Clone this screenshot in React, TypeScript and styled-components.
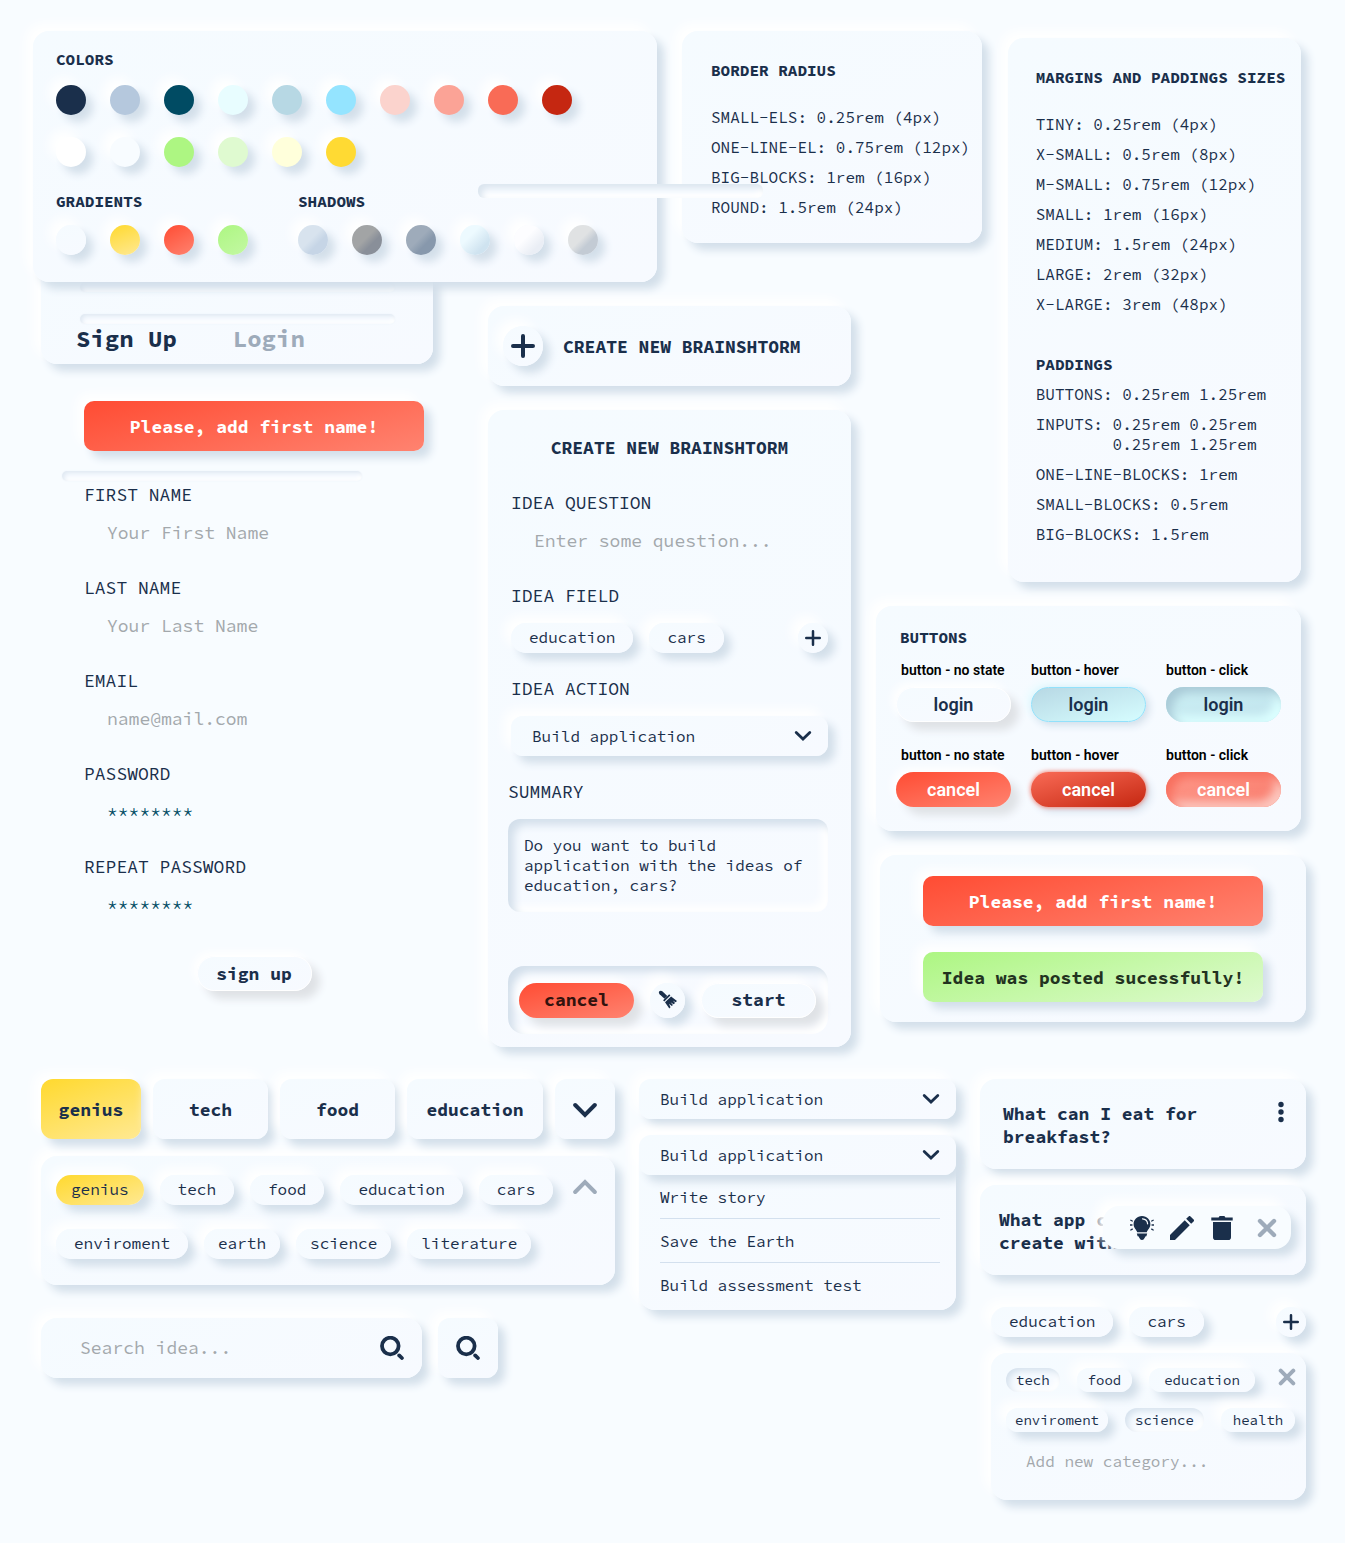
import React from "react";
import styled, { createGlobalStyle, css } from "styled-components";

const navy = "#1a2f4b";
const muted = "#9eabba";
const hint = "#a3a8ac";
const surface = "linear-gradient(160deg, #f5fbff 0%, #f7faff 100%)";
const red = "linear-gradient(165deg, #ff4c33 0%, #ff8370 100%)";
const green = "linear-gradient(165deg, #adf682 0%, #dffad0 100%)";
const yellow = "linear-gradient(160deg, #ffd92e 0%, #ffe993 100%)";
const raised = "7px 7px 8px #d3dfea, -7px -7px 12px #ffffff";
const sunken = "inset 6px 6px 8px #d3dfeb, inset -6px -6px 8px #ffffff";

const Global = createGlobalStyle`
  *, *::before, *::after { box-sizing: border-box; }
  body {
    margin: 0;
    background: #f8fcff;
    color: ${navy};
    font-family: "Source Code Pro", "Noto Sans Mono", "Liberation Mono", monospace;
    font-size: 16px;
    line-height: 20px;
  }
  button, input, select, textarea {
    font: inherit;
    color: inherit;
    border: 0;
    background: none;
    margin: 0;
    padding: 0;
    outline: 0;
  }
  button { cursor: pointer; }
  h2, h3, p, ul { margin: 0; padding: 0; }
  ul { list-style: none; }
  svg { display: block; flex: none; }
`;

const Page = styled.main`
  padding: 31px 0 43px;
  overflow-x: hidden;
`;

const Upper = styled.div`
  display: grid;
  grid-template-columns:
    minmax(0, 430fr) minmax(0, 169fr) minmax(0, 169fr)
    minmax(0, 106fr) minmax(0, 294fr);
  grid-template-rows: auto 1fr;
  gap: 24px 25px;
  align-items: start;
  padding: 0 44px 0 33px;
`;

const Lower = styled.div`
  display: grid;
  grid-template-columns: minmax(0, 574fr) minmax(0, 317fr) minmax(0, 326fr);
  gap: 24px;
  align-items: start;
  padding: 0 39px 0 41px;
  margin-top: 32px;
`;

const Card = styled.section`
  border-radius: 16px;
  background: ${surface};
  box-shadow: ${raised};
`;

const Heading = styled.h2`
  font-size: 16px;
  line-height: 20px;
  font-weight: 700;
  white-space: nowrap;
`;

const BigHeading = styled.h2<{ $center?: boolean }>`
  font-size: 18px;
  line-height: 20px;
  font-weight: 700;
  white-space: nowrap;
  text-align: ${(p) => (p.$center ? "center" : "left")};
`;

/* Palette */

const PaletteCard = styled(Card)`
  grid-column: 1 / 3;
  grid-row: 1;
  position: relative;
  z-index: 2;
  padding: 18px 23px 27px;
`;

const Swatches = styled.div<{ $top: number }>`
  display: flex;
  gap: 24px;
  margin-top: ${(p) => p.$top}px;
`;

const Swatch = styled.span<{ $fill: string }>`
  flex: none;
  width: 30px;
  height: 30px;
  border-radius: 50%;
  background: ${(p) => p.$fill};
  box-shadow: ${raised};
`;

const PaletteGroups = styled.div`
  display: flex;
  gap: 50px;
  margin-top: 24px;
`;

/* Specification lists */

const SpecList = styled.ul<{ $top: number }>`
  position: relative;
  z-index: 1;
  margin-top: ${(p) => p.$top}px;
`;

const SpecItem = styled.li`
  padding: 5px 0;
  white-space: pre;
`;

const RadiusCard = styled(Card)`
  grid-column: 3 / 5;
  grid-row: 1;
  position: relative;
  z-index: 3;
  padding: 29px 0 21px 29px;
`;

const SideStack = styled.div`
  grid-column: 4 / 6;
  grid-row: 1 / 3;
  display: flex;
  flex-direction: column;
  gap: 24px;
`;

const SizesCard = styled(Card)`
  align-self: flex-end;
  width: 69%;
  margin-top: 7px;
  padding: 29px 0 33px 28px;
`;

const SubHeading = styled(Heading)`
  margin-top: 35px;
`;

const Groove = styled.div`
  height: 10px;
  border-radius: 6px;
  background: #f7fbff;
  box-shadow: inset 2px 2px 4px #dfe8f2, inset -2px -2px 4px #ffffff, 0 0 2px #edf3f9;
`;

const CardGroove = styled(Groove)`
  margin: 0 2px 22px 4px;
`;

const FormGroove = styled(Groove)`
  width: 300px;
  margin: 20px 0 4px -22px;
`;

const FloatingGroove = styled.div`
  position: absolute;
  top: 153px;
  left: -204px;
  width: 285px;
  height: 14px;
  border-radius: 6px;
  background: #f7fbff;
  box-shadow: inset 4px 4px 6px #dbe5ef, inset -4px -4px 6px #ffffff;
`;

/* Sign up */

const SignUpColumn = styled.div`
  grid-column: 1;
  grid-row: 2;
`;

const TabsCard = styled(Card)`
  margin: -60px 30px 0 8px;
  padding: 36px 36px 13px 35px;
`;

const AuthTabs = styled.div`
  display: flex;
  gap: 56px;
  margin-top: -19px;
`;

const AuthTab = styled.button<{ $active?: boolean }>`
  font-size: 24px;
  line-height: 24px;
  font-weight: 700;
  color: ${(p) => (p.$active ? navy : muted)};
`;

const SignUpForm = styled.form`
  margin: 37px 39px 0 51px;
`;

const Alert = styled.p<{ $ok?: boolean }>`
  height: 50px;
  padding-top: 2px;
  display: flex;
  align-items: center;
  justify-content: center;
  border-radius: 10px;
  font-size: 18px;
  font-weight: 700;
  white-space: nowrap;
  color: ${(p) => (p.$ok ? "#22331f" : "#ffffff")};
  background: ${(p) => (p.$ok ? green : red)};
  box-shadow: ${raised};
`;

const Field = styled.div<{ $gap?: number }>`
  display: flex;
  flex-direction: column;
  gap: ${(p) => p.$gap ?? 10}px;
`;

const FieldList = styled.div<{ $gap: number }>`
  display: flex;
  flex-direction: column;
  gap: ${(p) => p.$gap}px;
`;

const Label = styled.label`
  font-size: 18px;
  line-height: 20px;
`;

const TextInput = styled.input`
  width: 100%;
  height: 36px;
  padding: 0 0 2px 23px;
  font-size: 18px;
  color: #004b63;
  &::placeholder { color: ${hint}; opacity: 1; }
`;

/* Buttons */

type Look = "plain" | "plainHover" | "plainClick" | "danger" | "dangerHover" | "dangerClick";

const looks: Record<Look, ReturnType<typeof css>> = {
  plain: css`
    background: ${surface};
    border: 1px solid #ffffff;
    box-shadow: 8px 8px 8px #dfe2e6, -4px -4px 10px #ffffff;
  `,
  plainHover: css`
    background: linear-gradient(165deg, #b7d8e4, #d6fdff);
    border: 1px solid #92e1fb;
    box-shadow: 3px 3px 8px #d0dde9, -3px -3px 8px #e4fbff;
  `,
  plainClick: css`
    background: linear-gradient(165deg, #cdf1f5, #bfe2ec);
    box-shadow: inset 6px 6px 10px #a9cad7, inset -6px -6px 10px #dcffff;
  `,
  danger: css`
    color: #ffffff;
    background: ${red};
    box-shadow: 8px 8px 8px #dfe2e6, -4px -4px 10px #ffffff;
  `,
  dangerHover: css`
    color: #ffffff;
    background: linear-gradient(165deg, #f96b56, #c52711);
    box-shadow: 0 0 5px #f96b56, 4px 4px 8px #d0dde9;
  `,
  dangerClick: css`
    color: #ffffff;
    background: linear-gradient(165deg, #ff9d8f, #f87868);
    box-shadow: inset 6px 6px 10px #f8705f, inset -6px -6px 10px #fcc9c1;
  `,
};

const Pill = styled.button<{ $look: Look }>`
  height: 35px;
  border-radius: 18px;
  font-family: Roboto, "Liberation Sans", sans-serif;
  font-size: 18px;
  font-weight: 600;
  ${(p) => looks[p.$look]}
`;

const MonoPill = styled.button<{ $look: Look }>`
  width: 115px;
  height: 35px;
  border-radius: 18px;
  font-size: 18px;
  font-weight: 700;
  ${(p) => looks[p.$look]}
  color: ${(p) => (p.$look === "danger" ? "#33130e" : navy)};
`;

const SignUpButton = styled(MonoPill)`
  display: block;
  margin: 33px auto 0;
`;

const RoundButton = styled.button<{ $size: number }>`
  flex: none;
  width: ${(p) => p.$size}px;
  height: ${(p) => p.$size}px;
  border-radius: 50%;
  display: flex;
  align-items: center;
  justify-content: center;
  background: ${surface};
  box-shadow: ${raised};
`;

const ButtonsCard = styled(Card)`
  padding: 21px 20px 24px;
`;

const ButtonsHeading = styled(Heading)`
  padding-left: 4px;
`;

const ButtonGrid = styled.div`
  display: grid;
  grid-template-columns: repeat(3, minmax(0, 1fr));
  gap: 23px 20px;
  margin-top: 13px;
`;

const Sample = styled.div<{ $inset?: boolean }>`
  display: flex;
  flex-direction: column;
  gap: 7px;
  & > span {
    padding-left: ${(p) => (p.$inset ? 5 : 0)}px;
    color: #000000;
    font: 600 14px/20px Roboto, "Liberation Sans", sans-serif;
    white-space: nowrap;
  }
`;

const AlertsCard = styled(Card)`
  display: flex;
  flex-direction: column;
  gap: 26px;
  margin: 0 -5px 0 4px;
  padding: 21px 43px 20px;
`;

/* Brainstorm */

const BrainColumn = styled.div`
  grid-column: 2 / 4;
  grid-row: 2;
  display: flex;
  flex-direction: column;
  gap: 24px;
`;

const BrainHeader = styled(Card)`
  display: flex;
  align-items: center;
  gap: 20px;
  padding: 20px 15px;
  & > h2 { padding-top: 2px; }
`;

const BrainForm = styled(Card).attrs({ as: "form" })`
  padding: 28px 23px 13px;
`;

const BrainFields = styled.div`
  margin-top: 35px;
`;

const BrainBlock = styled.div<{ $top: number }>`
  display: flex;
  flex-direction: column;
  gap: 17px;
  margin-top: ${(p) => p.$top}px;
`;

const Summary = styled.div`
  display: flex;
  flex-direction: column;
  gap: 17px;
  margin: 26px 0 0 -3px;
`;

const SummaryText = styled.textarea`
  display: block;
  height: 93px;
  padding: 16px 16px 17px;
  line-height: 20px;
  resize: none;
  overflow: hidden;
  border-radius: 12px;
  box-shadow: ${sunken};
`;

const Actions = styled.div`
  display: flex;
  align-items: center;
  justify-content: space-between;
  height: 68px;
  margin: 54px 0 0 -3px;
  padding: 0 12px 0 11px;
  border-radius: 16px;
  box-shadow: ${sunken};
`;

const ChipRow = styled.div<{ $top?: number; $gap?: number }>`
  display: flex;
  align-items: center;
  gap: ${(p) => p.$gap ?? 16}px;
  margin-top: ${(p) => p.$top ?? 0}px;
  & > button:last-child:nth-child(3) { margin-left: ${(p) => (p.$gap ? 0 : "auto")}; }
`;

const Chip = styled.button<{ $pad?: number; $active?: boolean }>`
  height: 30px;
  padding: 0 ${(p) => p.$pad ?? 18}px 2px;
  border-radius: 15px;
  white-space: nowrap;
  background: ${(p) => (p.$active ? yellow : surface)};
  box-shadow: ${raised};
`;

const SmallChip = styled.button<{ $pressed?: boolean; $pad?: number }>`
  height: 24px;
  padding: 0 ${(p) => p.$pad ?? 10}px;
  border-radius: 12px;
  font-size: 14px;
  white-space: nowrap;
  background: ${surface};
  box-shadow: ${(p) =>
    p.$pressed ? "inset 3px 3px 6px #d5e1ed, inset -3px -3px 6px #ffffff" : raised};
`;

const SelectBox = styled.div`
  position: relative;
  z-index: 1;
  border-radius: 12px;
  background: ${surface};
  box-shadow: ${raised};
  & > select {
    display: block;
    width: 100%;
    height: 40px;
    padding: 0 40px 0 21px;
    appearance: none;
  }
  & > svg {
    position: absolute;
    right: 16px;
    top: 14px;
    pointer-events: none;
  }
`;

/* Categories and search */

const LeftStack = styled.div``;

const TabGrid = styled.div`
  display: grid;
  grid-template-columns: 100fr 115fr 115fr 136fr 60fr;
  gap: 12px;
`;

const Tab = styled.button<{ $active?: boolean }>`
  display: flex;
  align-items: center;
  justify-content: center;
  height: 60px;
  min-width: 0;
  padding-top: 2px;
  border-radius: 12px;
  font-size: 18px;
  font-weight: 700;
  background: ${(p) => (p.$active ? yellow : surface)};
  box-shadow: ${raised};
`;

const ChipsCard = styled(Card)`
  display: flex;
  justify-content: space-between;
  align-items: flex-start;
  margin-top: 17px;
  padding: 19px 18px 26px 15px;
`;

const CollapseButton = styled.button`
  padding: 4px 0;
`;

const SearchRow = styled.form`
  display: flex;
  gap: 16px;
  margin-top: 33px;
`;

const SearchBox = styled(Card).attrs({ as: "div" })`
  flex: 0 1 381px;
  display: flex;
  align-items: center;
  height: 60px;
  padding: 0 18px 0 16px;
`;

const SquareButton = styled(Tab)`
  flex: none;
  width: 60px;
  padding-top: 0;
`;

/* Drop-downs */

const SelectStack = styled.div`
  display: flex;
  flex-direction: column;
  gap: 16px;
`;

const Menu = styled(Card)`
  padding-bottom: 4px;
`;

const Option = styled.li`
  margin: 0 16px 0 21px;
  padding: 12px 0 11px;
  & + & { border-top: 1px solid #d3e0ee; }
`;

/* Ideas */

const IdeaStack = styled.div``;

const IdeaCard = styled(Card)<{ $top: number; $left: number }>`
  position: relative;
  display: flex;
  justify-content: space-between;
  align-items: flex-start;
  height: 90px;
  margin-top: ${(p) => p.$top}px;
  padding: 22px 22px 0 ${(p) => p.$left}px;
  & > p {
    padding-top: 1px;
    font-size: 18px;
    line-height: 23px;
    font-weight: 700;
    white-space: nowrap;
  }
`;

const Toolbar = styled.div`
  position: absolute;
  right: 15px;
  top: 21px;
  display: flex;
  align-items: center;
  gap: 16px;
  width: 188px;
  height: 43px;
  padding-left: 27px;
  border-radius: 16px;
  background: #f8fcff;
  box-shadow: ${raised};
  & > button:last-child { margin-left: 7px; }
`;

const Categories = styled.div`
  margin: 32px 0 0 11px;
`;

const CategoryCard = styled(Card)`
  margin-top: 16px;
  padding: 15px 10px 19px 15px;
`;

const CategoryTop = styled.div`
  display: flex;
  justify-content: space-between;
  align-items: flex-start;
`;

const CategoryInput = styled(TextInput)`
  height: 40px;
  margin-top: 9px;
  padding: 0 0 0 20px;
  font-size: 16px;
`;

/* Icons */

const Plus = ({ size, weight }: { size: number; weight: number }) => {
  const c = size / 2;
  const r = c - weight / 2;
  return (
    <svg width={size} height={size} viewBox={`${-c} ${-c} ${size} ${size}`} stroke={navy} strokeWidth={weight} strokeLinecap="round">
      <path d={`M0 ${-r}V${r}M${-r} 0H${r}`} />
    </svg>
  );
};

const Chevron = () => (
  <svg width="18" height="12" viewBox="0 0 18 12" fill="none" stroke={navy} strokeWidth="2.8" strokeLinecap="round">
    <path d="M2.2 2.4L9 9L15.8 2.4" />
  </svg>
);

const WideChevron = ({ up }: { up?: boolean }) => (
  <svg width="24" height="16" viewBox="0 0 24 16" fill="none" stroke={up ? muted : navy} strokeWidth="4" strokeLinecap="round">
    <path d={up ? "M2.2 13L12 3L21.8 13" : "M2.2 3L12 13L21.8 3"} />
  </svg>
);

const Magnifier = () => (
  <svg width="24" height="24" viewBox="0 0 24 24" fill="none" stroke={navy} strokeWidth="3.8" strokeLinecap="round">
    <circle cx="10.3" cy="10" r="8.3" />
    <path d="M19.2 19.4L21.9 22" />
  </svg>
);

const Cross = ({ size }: { size: number }) => (
  <svg width={size} height={size} viewBox="0 0 20 20" stroke={muted} strokeWidth="4.4" strokeLinecap="round">
    <path d="M3 3L17 17M17 3L3 17" />
  </svg>
);

const Dots = () => (
  <svg width="6" height="22" viewBox="0 0 6 22" fill={navy}>
    <circle cx="3" cy="3.5" r="2.7" />
    <circle cx="3" cy="11" r="2.7" />
    <circle cx="3" cy="18.5" r="2.7" />
  </svg>
);

const Broom = () => (
  <svg width="20" height="20" viewBox="0 0 20 20" fill={navy}>
    <path d="M1.3 1.3C2.1.5 3.6.6 4.6 1.5L9.3 6L6.5 8.8L1.6 4.2C.8 3.3.6 2.1 1.3 1.3Z" />
    <path d="M11.2 4.3L12.4 5.5L6.3 11.4L5.1 10.2Z" />
    <path d="M13.1 6.4L19 11L17.6 12.2L14.7 10.6L17.1 13L15.6 14.3L12.6 12.2L14.9 15L13.8 16.1L11 13.8L12.5 17.3L11.3 18.6L7 12.3Z" />
  </svg>
);

const Bulb = () => (
  <svg width="24" height="24" viewBox="0 0 24 24" fill={navy}>
    <path d="M12 0C7 0 3.6 3.7 3.6 8.2C3.6 12.2 6.5 13.4 7.2 16.2H16.8C17.5 13.4 20.4 12.2 20.4 8.2C20.4 3.7 17 0 12 0Z" />
    <path d="M6.8 17.5H17.2L16.4 20.2H15.6L13.8 23.3C13 24.2 11 24.2 10.2 23.3L8.4 20.2H7.6Z" />
    <path d="M12.5 2.8C15.5 3 17.4 5 17.6 7.8" fill="none" stroke="#f8fcff" strokeWidth="1.2" strokeLinecap="round" />
    <path d="M.8 4.2L2.3 5M.2 9H2M.8 14L2.3 13.1M23.2 4.2L21.7 5M23.8 9H22M23.2 14L21.7 13.1" stroke={navy} strokeWidth="1.3" strokeLinecap="round" />
  </svg>
);

const Pencil = () => (
  <svg width="24" height="24" viewBox="3 3 18 18" fill={navy}>
    <path d="M3 17.25V21h3.75L17.81 9.94l-3.75-3.75L3 17.25zM20.71 7.04a1 1 0 0 0 0-1.41l-2.34-2.34a1 1 0 0 0-1.41 0l-1.83 1.83 3.75 3.75 1.83-1.83z" />
  </svg>
);

const Trash = () => (
  <svg width="24" height="24" viewBox="0 0 24 24" fill={navy}>
    <path d="M1.3 1.6H8.6L9.6 0H14.4L15.4 1.6H22.7V4.6H1.3Z" />
    <path d="M3 6H21V21.2A2.8 2.8 0 0 1 18.2 24H5.8A2.8 2.8 0 0 1 3 21.2Z" />
  </svg>
);

/* Data */

const solidRows = [
  ["#1a2f4b", "#b5c8dd", "#004b63", "#e8fdff", "#b7d8e4", "#94e4ff", "#fbd3cd", "#fba396", "#f96b56", "#c52711"],
  ["#ffffff", "#f8fcff", "#adf682", "#dffad0", "#ffffdb", "#ffda33"],
];
const gradients = [surface, yellow, "linear-gradient(150deg, #ff4c33, #ff8370)", "linear-gradient(150deg, #adf682, #c3f8a3)"];
const shadows = [
  "linear-gradient(135deg, #d8e3ee 45%, #c6d5e6 65%)",
  "linear-gradient(135deg, #a2a4a5 45%, #898f99 65%)",
  "linear-gradient(135deg, #9eabba 45%, #8798ac 65%)",
  "linear-gradient(135deg, #edfaff 35%, #cfe3f0 75%)",
  "linear-gradient(135deg, #fdfdff 40%, #eaeef5 75%)",
  "linear-gradient(135deg, #e0e2e3 45%, #c3cbd4 65%)",
];

const radii = [
  "SMALL-ELS: 0.25rem (4px)",
  "ONE-LINE-EL: 0.75rem (12px)",
  "BIG-BLOCKS: 1rem (16px)",
  "ROUND: 1.5rem (24px)",
];
const margins = [
  "TINY: 0.25rem (4px)",
  "X-SMALL: 0.5rem (8px)",
  "M-SMALL: 0.75rem (12px)",
  "SMALL: 1rem (16px)",
  "MEDIUM: 1.5rem (24px)",
  "LARGE: 2rem (32px)",
  "X-LARGE: 3rem (48px)",
];
const paddings = [
  "BUTTONS: 0.25rem 1.25rem",
  "INPUTS: 0.25rem 0.25rem\n        0.25rem 1.25rem",
  "ONE-LINE-BLOCKS: 1rem",
  "SMALL-BLOCKS: 0.5rem",
  "BIG-BLOCKS: 1.5rem",
];

const signUpFields = [
  { id: "first", label: "FIRST NAME", placeholder: "Your First Name" },
  { id: "last", label: "LAST NAME", placeholder: "Your Last Name" },
  { id: "email", label: "EMAIL", placeholder: "name@mail.com" },
  { id: "password", label: "PASSWORD", value: "********" },
  { id: "repeat", label: "REPEAT PASSWORD", value: "********" },
];

const samples: { state: string; text: string; look: Look }[] = [
  { state: "no state", text: "login", look: "plain" },
  { state: "hover", text: "login", look: "plainHover" },
  { state: "click", text: "login", look: "plainClick" },
  { state: "no state", text: "cancel", look: "danger" },
  { state: "hover", text: "cancel", look: "dangerHover" },
  { state: "click", text: "cancel", look: "dangerClick" },
];

const Specs = ({ items, top }: { items: string[]; top: number }) => (
  <SpecList $top={top}>
    {items.map((item) => (
      <SpecItem key={item}>{item}</SpecItem>
    ))}
  </SpecList>
);

const ActionSelect = ({ id, label }: { id: string; label?: string }) => (
  <SelectBox>
    <select id={id} aria-label={label}>
      <option>Build application</option>
      <option>Write story</option>
      <option>Save the Earth</option>
      <option>Build assessment test</option>
    </select>
    <Chevron />
  </SelectBox>
);

const PickedChips = () => (
  <ChipRow>
    <Chip type="button">education</Chip>
    <Chip type="button">cars</Chip>
    <RoundButton type="button" $size={30} aria-label="Add category">
      <Plus size={16} weight={2.5} />
    </RoundButton>
  </ChipRow>
);

export default function App() {
  return (
    <>
      <Global />
      <Page>
        <Upper>
          <PaletteCard>
            <Heading>COLORS</Heading>
            {solidRows.map((row, i) => (
              <Swatches key={i} $top={i ? 22 : 16}>
                {row.map((fill) => (
                  <Swatch key={fill} $fill={fill} />
                ))}
              </Swatches>
            ))}
            <PaletteGroups>
              <div>
                <Heading>GRADIENTS</Heading>
                <Swatches $top={14}>
                  {gradients.map((fill) => (
                    <Swatch key={fill} $fill={fill} />
                  ))}
                </Swatches>
              </div>
              <div>
                <Heading>SHADOWS</Heading>
                <Swatches $top={14}>
                  {shadows.map((fill) => (
                    <Swatch key={fill} $fill={fill} />
                  ))}
                </Swatches>
              </div>
            </PaletteGroups>
          </PaletteCard>

          <RadiusCard>
            <FloatingGroove />
            <Heading>BORDER RADIUS</Heading>
            <Specs items={radii} top={22} />
          </RadiusCard>

          <SideStack>
            <SizesCard>
              <Heading>MARGINS AND PADDINGS SIZES</Heading>
              <Specs items={margins} top={22} />
              <SubHeading>PADDINGS</SubHeading>
              <Specs items={paddings} top={5} />
            </SizesCard>

            <ButtonsCard>
              <ButtonsHeading>BUTTONS</ButtonsHeading>
              <ButtonGrid>
                {samples.map((s, i) => (
                  <Sample key={s.look} $inset={i % 3 === 0}>
                    <span>button - {s.state}</span>
                    <Pill type="button" $look={s.look}>{s.text}</Pill>
                  </Sample>
                ))}
              </ButtonGrid>
            </ButtonsCard>

            <AlertsCard>
              <Alert>Please, add first name!</Alert>
              <Alert $ok>Idea was posted sucessfully!</Alert>
            </AlertsCard>
          </SideStack>

          <SignUpColumn>
            <TabsCard>
              <CardGroove />
              <CardGroove />
              <AuthTabs>
                <AuthTab type="button" $active>Sign Up</AuthTab>
                <AuthTab type="button">Login</AuthTab>
              </AuthTabs>
            </TabsCard>
            <SignUpForm>
              <Alert>Please, add first name!</Alert>
              <FormGroove />
              <FieldList $gap={27}>
                {signUpFields.map((f) => (
                  <Field key={f.id}>
                    <Label htmlFor={f.id}>{f.label}</Label>
                    <TextInput id={f.id} placeholder={f.placeholder} defaultValue={f.value} />
                  </Field>
                ))}
              </FieldList>
              <SignUpButton type="button" $look="plain">sign up</SignUpButton>
            </SignUpForm>
          </SignUpColumn>

          <BrainColumn>
            <BrainHeader>
              <RoundButton type="button" $size={40} aria-label="Create">
                <Plus size={24} weight={4} />
              </RoundButton>
              <BigHeading>CREATE NEW BRAINSHTORM</BigHeading>
            </BrainHeader>
            <BrainForm>
              <BigHeading $center>CREATE NEW BRAINSHTORM</BigHeading>
              <BrainFields>
                <Field>
                  <Label htmlFor="question">IDEA QUESTION</Label>
                  <TextInput id="question" placeholder="Enter some question..." />
                </Field>
                <BrainBlock $top={27}>
                  <Label as="span">IDEA FIELD</Label>
                  <PickedChips />
                </BrainBlock>
                <BrainBlock $top={26}>
                  <Label htmlFor="action">IDEA ACTION</Label>
                  <ActionSelect id="action" />
                </BrainBlock>
              </BrainFields>
              <Summary>
                <Label htmlFor="summary">SUMMARY</Label>
                <SummaryText
                  id="summary"
                  readOnly
                  value="Do you want to build application with the ideas of education, cars?"
                />
              </Summary>
              <Actions>
                <MonoPill type="button" $look="danger">cancel</MonoPill>
                <RoundButton type="button" $size={35} aria-label="Clear">
                  <Broom />
                </RoundButton>
                <MonoPill type="button" $look="plain">start</MonoPill>
              </Actions>
            </BrainForm>
          </BrainColumn>
        </Upper>

        <Lower>
          <LeftStack>
            <TabGrid>
              <Tab type="button" $active>genius</Tab>
              <Tab type="button">tech</Tab>
              <Tab type="button">food</Tab>
              <Tab type="button">education</Tab>
              <Tab type="button" aria-label="More categories"><WideChevron /></Tab>
            </TabGrid>
            <ChipsCard>
              <div>
                <ChipRow $gap={16}>
                  <Chip type="button" $active $pad={15}>genius</Chip>
                  <Chip type="button">tech</Chip>
                  <Chip type="button">food</Chip>
                  <Chip type="button">education</Chip>
                  <Chip type="button">cars</Chip>
                </ChipRow>
                <ChipRow $top={24} $gap={16}>
                  <Chip type="button">enviroment</Chip>
                  <Chip type="button" $pad={14}>earth</Chip>
                  <Chip type="button" $pad={14}>science</Chip>
                  <Chip type="button" $pad={14}>literature</Chip>
                </ChipRow>
              </div>
              <CollapseButton type="button" aria-label="Collapse">
                <WideChevron up />
              </CollapseButton>
            </ChipsCard>
            <SearchRow>
              <SearchBox>
                <TextInput aria-label="Search idea" placeholder="Search idea..." />
                <Magnifier />
              </SearchBox>
              <SquareButton type="button" aria-label="Search">
                <Magnifier />
              </SquareButton>
            </SearchRow>
          </LeftStack>

          <SelectStack>
            <ActionSelect id="closed" label="Idea action" />
            <Menu>
              <ActionSelect id="opened" label="Idea action, opened" />
              <ul>
                <Option>Write story</Option>
                <Option>Save the Earth</Option>
                <Option>Build assessment test</Option>
              </ul>
            </Menu>
          </SelectStack>

          <IdeaStack>
            <IdeaCard $top={0} $left={23}>
              <p>What can I eat for<br />breakfast?</p>
              <button type="button" aria-label="Idea menu"><Dots /></button>
            </IdeaCard>
            <IdeaCard $top={16} $left={19}>
              <p>What app can I<br />create with react?</p>
              <Toolbar>
                <button type="button" aria-label="Brainstorm"><Bulb /></button>
                <button type="button" aria-label="Edit"><Pencil /></button>
                <button type="button" aria-label="Delete"><Trash /></button>
                <button type="button" aria-label="Close"><Cross size={20} /></button>
              </Toolbar>
            </IdeaCard>
            <Categories>
              <PickedChips />
              <CategoryCard>
                <CategoryTop>
                  <ChipRow $gap={17}>
                    <SmallChip type="button" $pressed>tech</SmallChip>
                    <SmallChip type="button" $pad={11}>food</SmallChip>
                    <SmallChip type="button" $pad={15}>education</SmallChip>
                  </ChipRow>
                  <button type="button" aria-label="Close categories"><Cross size={18} /></button>
                </CategoryTop>
                <ChipRow $top={16} $gap={17}>
                  <SmallChip type="button" $pad={9}>enviroment</SmallChip>
                  <SmallChip type="button" $pressed>science</SmallChip>
                  <SmallChip type="button" $pad={12}>health</SmallChip>
                </ChipRow>
                <CategoryInput aria-label="New category" placeholder="Add new category..." />
              </CategoryCard>
            </Categories>
          </IdeaStack>
        </Lower>
      </Page>
    </>
  );
}
